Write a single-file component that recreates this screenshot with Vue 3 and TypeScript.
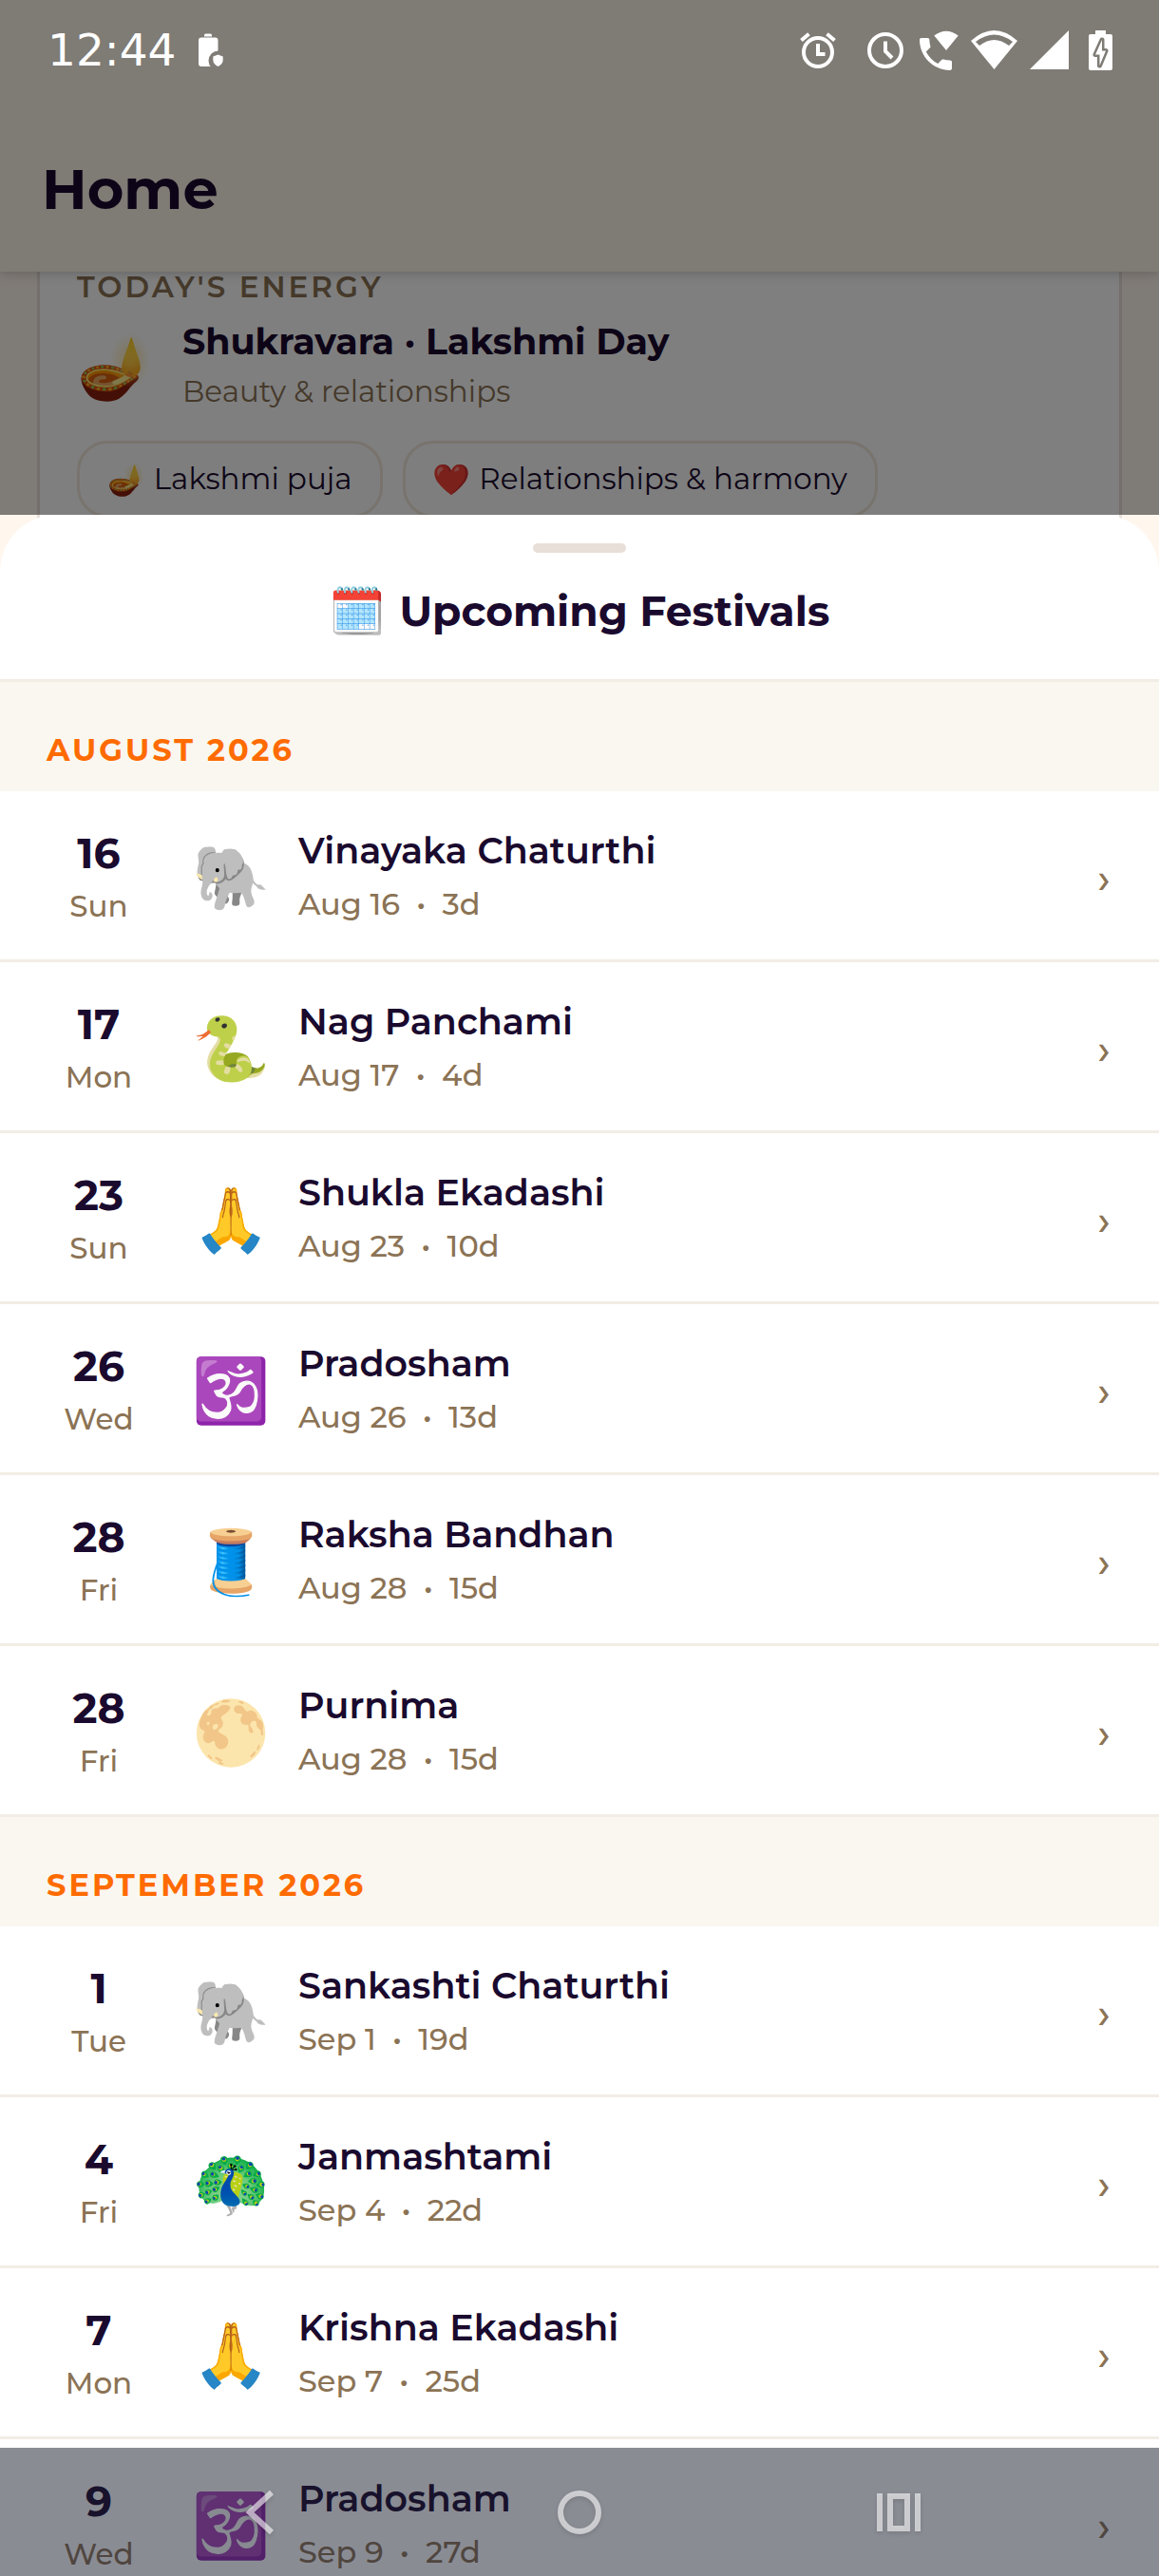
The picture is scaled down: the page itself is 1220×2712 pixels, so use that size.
<script setup lang="ts">
interface Festival {
  day: number
  weekday: string
  icon: string
  name: string
  date: string
  remaining: string
}

interface MonthGroup {
  label: string
  festivals: Festival[]
}

const months: MonthGroup[] = [
  {
    label: 'August 2026',
    festivals: [
      { day: 16, weekday: 'Sun', icon: '🐘', name: 'Vinayaka Chaturthi', date: 'Aug 16', remaining: '3d' },
      { day: 17, weekday: 'Mon', icon: '🐍', name: 'Nag Panchami', date: 'Aug 17', remaining: '4d' },
      { day: 23, weekday: 'Sun', icon: '🙏', name: 'Shukla Ekadashi', date: 'Aug 23', remaining: '10d' },
      { day: 26, weekday: 'Wed', icon: '🕉️', name: 'Pradosham', date: 'Aug 26', remaining: '13d' },
      { day: 28, weekday: 'Fri', icon: '🧵', name: 'Raksha Bandhan', date: 'Aug 28', remaining: '15d' },
      { day: 28, weekday: 'Fri', icon: '🌕', name: 'Purnima', date: 'Aug 28', remaining: '15d' },
    ],
  },
  {
    label: 'September 2026',
    festivals: [
      { day: 1, weekday: 'Tue', icon: '🐘', name: 'Sankashti Chaturthi', date: 'Sep 1', remaining: '19d' },
      { day: 4, weekday: 'Fri', icon: '🦚', name: 'Janmashtami', date: 'Sep 4', remaining: '22d' },
      { day: 7, weekday: 'Mon', icon: '🙏', name: 'Krishna Ekadashi', date: 'Sep 7', remaining: '25d' },
      { day: 9, weekday: 'Wed', icon: '🕉️', name: 'Pradosham', date: 'Sep 9', remaining: '27d' },
    ],
  },
]

const practices = [
  { icon: '🪔', label: 'Lakshmi puja' },
  { icon: '❤️', label: 'Relationships & harmony' },
]
</script>

<template>
  <div class="screen">
    <div class="home">
      <header class="app-header">
        <h1>Home</h1>
      </header>
      <section class="energy-card">
        <h2 class="energy-label">Today's energy</h2>
        <div class="energy-main">
          <span class="energy-icon">🪔</span>
          <div>
            <p class="energy-title">Shukravara · Lakshmi Day</p>
            <p class="energy-sub">Beauty &amp; relationships</p>
          </div>
        </div>
        <ul class="chips">
          <li v-for="p in practices" :key="p.label" class="chip">
            <span class="chip-icon">{{ p.icon }}</span>
            <span>{{ p.label }}</span>
          </li>
        </ul>
      </section>
      <div class="scrim"></div>
    </div>

    <div class="status-bar">
      <time class="clock">12:44</time>
      <svg class="status-left" viewBox="206 30 34 46" width="34" height="46">
        <path fill="#fff" d="M216 38.500v-1.500a1.500 1.500 0 0 1 1.500-1.500h5a1.500 1.500 0 0 1 1.500 1.500v1.500z" />
        <rect x="210" y="39.500" width="20.500" height="30.500" rx="3" fill="#fff" />
        <circle cx="231" cy="64" r="10.500" fill="#7f7b75" />
        <path fill="#fff" d="M230.500 57.500l5.200 2v3.500c0 3.500-2.200 5.700-5.200 7-3-1.300-5.200-3.500-5.200-7v-3.500z" />
      </svg>
      <div class="status-icons">
        <svg viewBox="842 30 46 46" width="46" height="46" fill="none" stroke="#fff" stroke-width="4">
          <circle cx="861" cy="55" r="15" />
          <path d="M843.500 42.500l8-6.800M878.500 42.500l-8-6.800M861 46v11h7.500" />
        </svg>
        <svg viewBox="900 30 52 46" width="52" height="46" fill="none" stroke="#fff" stroke-width="4">
          <circle cx="932" cy="53" r="17" />
          <path d="M932 43.500v10.500l7 7" />
        </svg>
        <svg viewBox="966 30 46 46" width="46" height="46" fill="#fff">
          <path d="M998 53l-12.700-15.500q12.700-9.500 25.400 0z" />
          <path
            transform="translate(964.300 34.300) scale(1.890)"
            d="M20 15.500c-1.200 0-2.400-.2-3.600-.6-.3-.1-.7 0-1 .2l-2.200 2.200c-2.800-1.400-5.100-3.800-6.600-6.600l2.200-2.200c.3-.3.4-.7.2-1C8.700 6.400 8.500 5.200 8.500 4c0-.6-.4-1-1-1H4c-.6 0-1 .4-1 1 0 9.400 7.600 17 17 17 .6 0 1-.4 1-1v-3.500c0-.6-.4-1-1-1z"
          />
        </svg>
        <svg viewBox="1022 30 50 46" width="50" height="46" fill="#fff">
          <path
            fill-rule="evenodd"
            d="M1022 43Q1046.500 21 1071 43L1046.500 73ZM1027 44L1031 48Q1046.500 36 1062 48L1066 44Q1046.500 29 1027 44Z"
          />
        </svg>
        <svg viewBox="1084 30 46 46" width="46" height="46" fill="#fff">
          <path d="M1125 32v41h-41z" />
        </svg>
        <svg viewBox="1142 30 34 46" width="34" height="46">
          <path fill="#fff" d="M1153 32h11v4h5a2 2 0 0 1 2 2v34a2 2 0 0 1-2 2h-21a2 2 0 0 1-2-2V38a2 2 0 0 1 2-2h5z" />
          <path
            fill="#fff"
            stroke="#7f7b75"
            stroke-width="5"
            stroke-linejoin="round"
            paint-order="stroke"
            d="M1160 42l-7 15.500h4.500V69l6.500-15.500h-4z"
          />
        </svg>
      </div>
    </div>

    <main class="sheet">
      <header class="sheet-header">
        <span class="handle"></span>
        <h2><span class="title-icon">🗓️</span> Upcoming Festivals</h2>
      </header>
      <div class="festival-list">
        <section v-for="month in months" :key="month.label">
          <h3 class="month">{{ month.label }}</h3>
          <button v-for="f in month.festivals" :key="f.date + f.name" type="button" class="festival">
            <span class="when">
              <span class="day">{{ f.day }}</span>
              <span class="weekday">{{ f.weekday }}</span>
            </span>
            <span class="icon">{{ f.icon }}</span>
            <span class="info">
              <span class="name">{{ f.name }}</span>
              <span class="meta">{{ f.date }}&nbsp; •&nbsp; {{ f.remaining }}</span>
            </span>
            <span class="chevron">›</span>
          </button>
        </section>
      </div>
    </main>

    <nav class="system-nav">
      <button type="button" aria-label="Back">
        <svg viewBox="0 0 50 50" width="50" height="50">
          <path d="M37 4L14 25l23 21" />
        </svg>
      </button>
      <button type="button" aria-label="Home">
        <svg viewBox="0 0 50 50" width="50" height="50">
          <circle cx="25" cy="25" r="20" />
        </svg>
      </button>
      <button type="button" aria-label="Recent apps">
        <svg viewBox="0 0 50 50" width="50" height="50">
          <path d="M5 5v40M45 5v40M16 8h18v34H16z" />
        </svg>
      </button>
    </nav>
  </div>
</template>

<style>
body {
  margin: 0;
}
</style>

<style scoped>
.screen {
  position: relative;
  display: flex;
  flex-direction: column;
  height: 100vh;
  overflow: hidden;
  background: #fff6ee;
  color: #1a0a2e;
  font-family: Montserrat, Inter, 'Noto Color Emoji', sans-serif;
}

h1,
h2,
h3,
p,
ul {
  margin: 0;
  padding: 0;
}

button {
  border: 0;
  margin: 0;
  background: none;
  color: inherit;
  font: inherit;
  text-align: left;
}

/* Dimmed home page behind the sheet */
.home {
  position: relative;
  flex: none;
}

.app-header {
  position: relative;
  padding: 163px 44px 51px;
  background: #fff7eb;
  box-shadow: 0 2px 12px rgba(0, 0, 0, 0.2);
}

.app-header h1 {
  font-size: 59px;
  font-weight: 700;
  line-height: 72px;
}

.energy-card {
  margin: 0 39px;
  padding: 0 39px 57px;
  border: solid #e8dfd9;
  border-width: 0 3px;
  background: #fff;
}

.energy-label {
  margin-bottom: 18px;
  color: #8b7355;
  font-size: 31px;
  font-weight: 600;
  line-height: 32px;
  letter-spacing: 3px;
  text-transform: uppercase;
}

.energy-main {
  display: flex;
  align-items: center;
  margin-bottom: 28px;
}

.energy-icon {
  width: 111px;
  font-size: 64px;
  line-height: 72px;
}

.energy-title {
  margin-bottom: 4px;
  font-size: 38px;
  font-weight: 700;
  line-height: 48px;
}

.energy-sub {
  color: #8b7355;
  font-size: 31px;
  font-weight: 400;
  line-height: 48px;
}

.chips {
  display: flex;
  gap: 21px;
  list-style: none;
}

.chip {
  display: flex;
  gap: 9px;
  padding: 0 29px;
  border: 3px solid #f0e6da;
  border-radius: 32px;
  background: #fdfdfd;
  font-size: 31px;
  font-weight: 400;
  line-height: 75px;
}

.chip-icon {
  font-size: 32px;
}

.scrim {
  position: absolute;
  inset: 0 0 60px;
  background: rgba(0, 0, 0, 0.5);
}

.status-bar {
  position: absolute;
  inset: 0 0 auto;
  display: flex;
  align-items: center;
  height: 106px;
  padding: 0 44px 0 50px;
}

.clock {
  color: #fff;
  font-family: 'DejaVu Sans', sans-serif;
  font-size: 47px;
  line-height: 56px;
}

.status-left {
  margin-left: 20px;
}

.status-icons {
  display: flex;
  gap: 12px;
  margin-left: auto;
}

/* Bottom sheet */
.sheet {
  position: relative;
  display: flex;
  flex: 1;
  flex-direction: column;
  min-height: 0;
  margin-top: -60px;
  border-radius: 60px 60px 0 0;
  background: #fff;
}

.sheet-header {
  display: flex;
  flex-direction: column;
  align-items: center;
  padding: 30px 40px 42px;
  border-bottom: 3px solid #f2ede5;
}

.handle {
  width: 98px;
  height: 10px;
  margin-bottom: 31px;
  border-radius: 5px;
  background: #e8dfd9;
}

.sheet-header h2 {
  display: flex;
  gap: 14px;
  font-size: 44px;
  font-weight: 700;
  line-height: 60px;
}

.title-icon {
  font-size: 48px;
}

.festival-list {
  flex: 1;
  min-height: 0;
  overflow-y: auto;
  scrollbar-width: none;
}

.month {
  padding: 52px 49px 23px;
  background: #faf7f0;
  color: #ff6b00;
  font-size: 32px;
  font-weight: 700;
  line-height: 40px;
  letter-spacing: 3px;
  text-transform: uppercase;
}

.festival {
  display: flex;
  align-items: center;
  width: 100%;
  padding: 35px 36px 30px;
  border-bottom: 3px solid #f2ede5;
}

.when {
  display: flex;
  flex-direction: column;
  align-items: center;
  width: 136px;
}

.day {
  font-size: 44px;
  font-weight: 700;
  line-height: 60px;
}

.weekday {
  color: #8b7355;
  font-size: 31px;
  font-weight: 500;
  line-height: 52px;
}

.icon {
  display: flex;
  justify-content: center;
  width: 110px;
  margin: 0 16px;
  font-size: 66px;
  line-height: 72px;
}

.info {
  display: flex;
  flex: 1;
  flex-direction: column;
}

.name {
  font-size: 38px;
  font-weight: 600;
  line-height: 56px;
}

.meta {
  color: #8b7355;
  font-size: 32px;
  font-weight: 500;
  line-height: 56px;
}

.chevron {
  width: 44px;
  color: #8b7355;
  font-size: 44px;
  font-weight: 500;
  line-height: 48px;
  text-align: center;
}

/* Translucent system navigation over the list */
.system-nav {
  position: absolute;
  inset: auto 0 0;
  display: flex;
  height: 135px;
  padding: 0 106px;
  background: rgba(21, 25, 41, 0.5);
}

.system-nav button {
  display: flex;
  flex: 1;
  align-items: center;
  justify-content: center;
}

.system-nav svg {
  fill: none;
  stroke: rgba(255, 255, 255, 0.6);
  stroke-width: 6;
  filter: drop-shadow(0 2px 2px rgba(0, 0, 0, 0.2));
}
</style>
